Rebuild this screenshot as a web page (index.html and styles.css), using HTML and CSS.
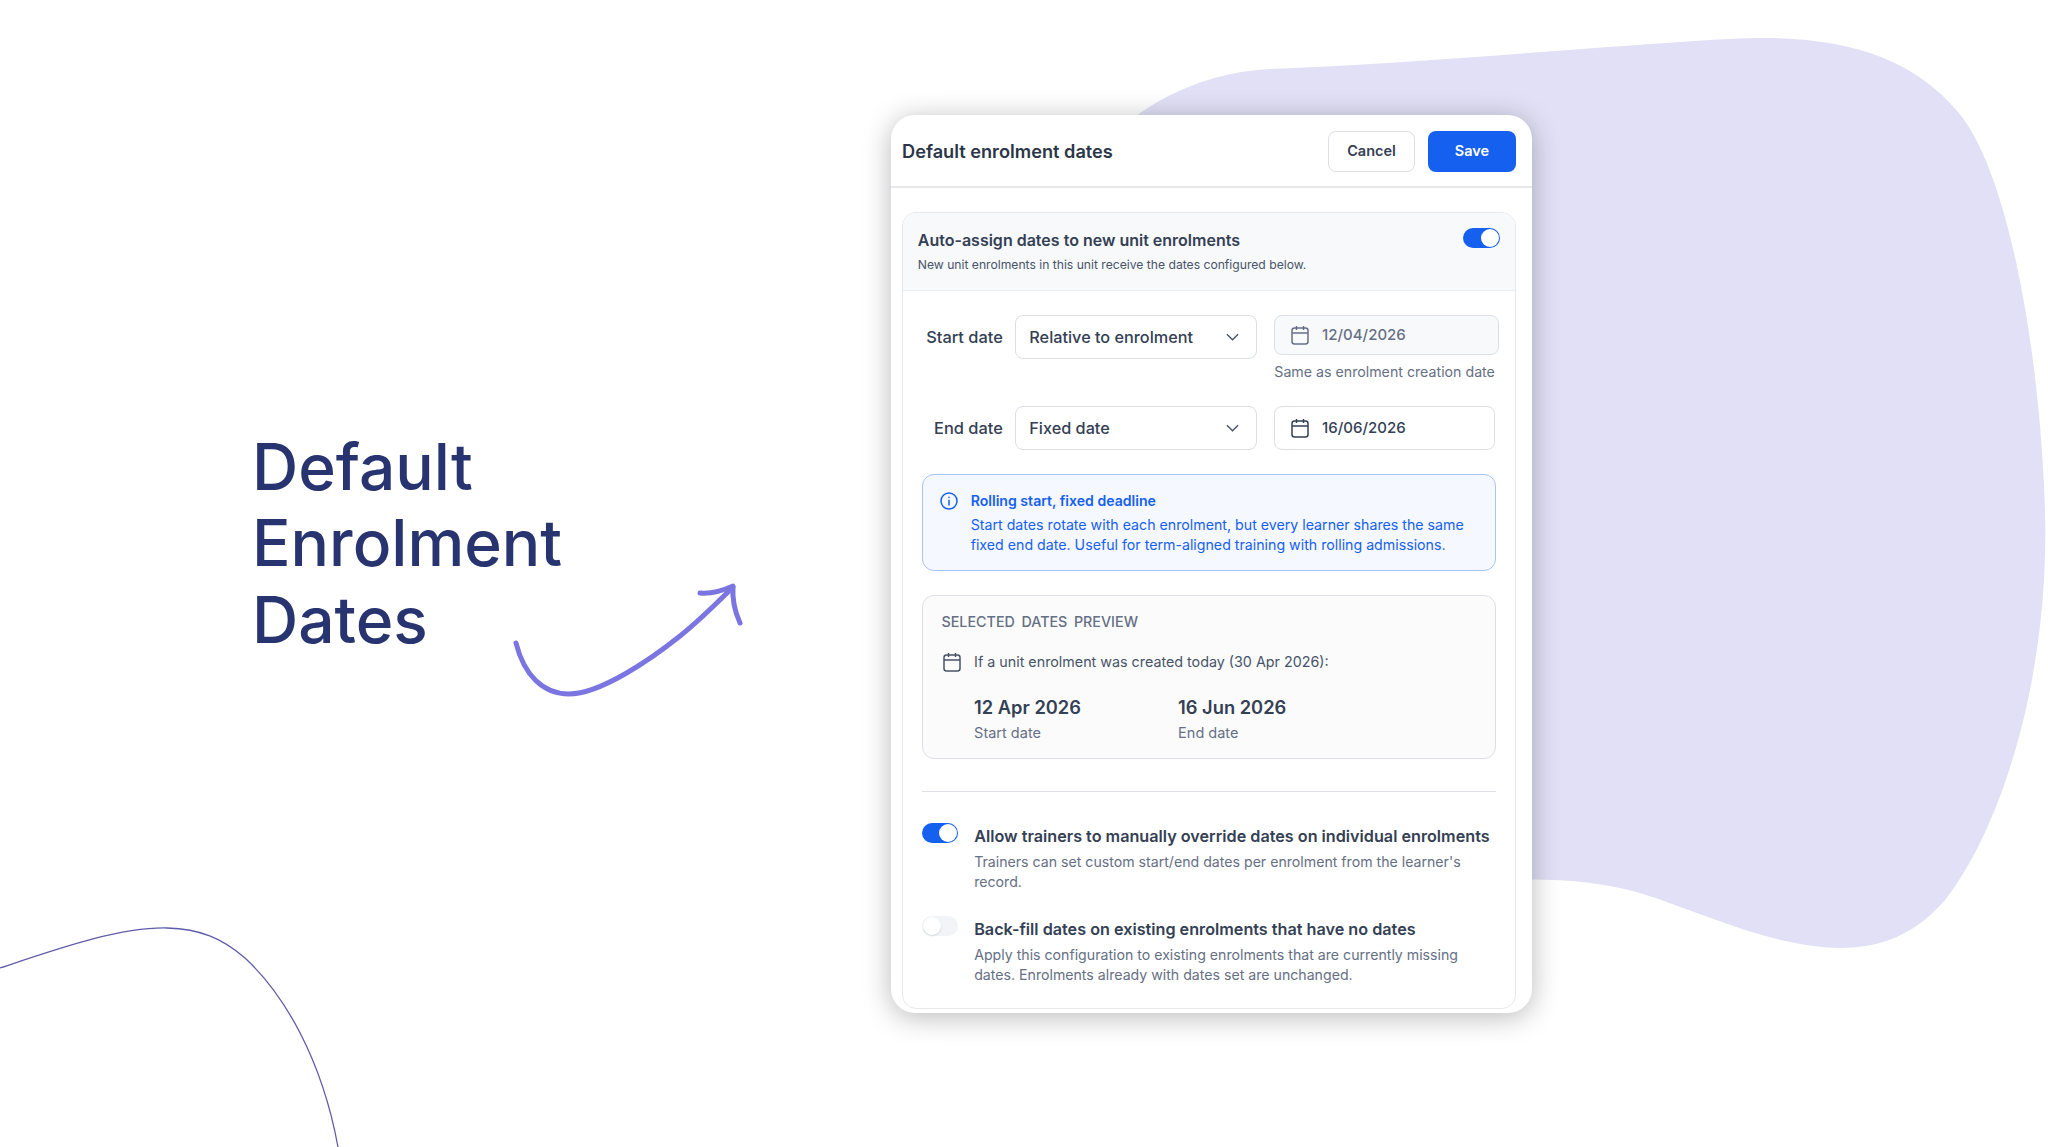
FILE: index.html
```html
<!DOCTYPE html>
<html lang="en">
<head>
<meta charset="utf-8">
<title>Default Enrolment Dates</title>
<link rel="stylesheet" href="styles.css">
</head>
<body>
<main class="page">
  <svg class="art" viewBox="0 0 2048 1147" aria-hidden="true">
    <path class="blob" d="M1100 146C1135 112 1190 73 1270 69C1400 64 1560 50 1680 42C1710 40 1740 38 1765 38C1850 38 1915 60 1958 112C2008 170 2040 350 2045 510C2050 680 2000 830 1945 900C1915 935 1880 948 1840 948C1775 948 1700 912 1640 893C1600 882 1560 878 1500 880Z"/>
    <path class="swoosh" d="M0 968C60 948 120 927 167 928C200 929 222 938 245 958C285 995 322 1060 338 1147"/>
    <path class="arrow" d="M516 643C524 675 543 694 569 694C600 694 650 660 680 636C700 620 716 604 733 587"/>
    <path class="arrow" d="M700 593C712 594 722 591 733 586C732 600 735 612 740 623"/>
  </svg>

  <h1 class="hero">Default<br>Enrolment<br>Dates</h1>

  <section class="card">
    <header class="card-head">
      <h2 class="card-title">Default enrolment dates</h2>
      <div class="actions">
        <button class="btn btn-ghost">Cancel</button>
        <button class="btn btn-primary">Save</button>
      </div>
    </header>

    <div class="card-body">
      <div class="panel">
        <div class="band">
          <div>
            <div class="band-title">Auto-assign dates to new unit enrolments</div>
            <div class="band-sub">New unit enrolments in this unit receive the dates configured below.</div>
          </div>
          <span class="toggle on"></span>
        </div>

        <div class="panel-body">
          <div class="row">
            <label class="row-label">Start date</label>
            <div class="select">Relative to enrolment
              <svg class="chev" viewBox="0 0 14 8"><path d="M1 1l6 6 6-6"/></svg>
            </div>
            <div class="field field-start">
              <div class="date date-off">
                <svg class="cal" viewBox="0 0 18 20"><rect x="1" y="3" width="16" height="16" rx="2.5"/><path d="M1 8h16M5.500 1v4M12.500 1v4"/></svg>
                12/04/2026
              </div>
              <div class="hint">Same as enrolment creation date</div>
            </div>
          </div>

          <div class="row row-end">
            <label class="row-label">End date</label>
            <div class="select">Fixed date
              <svg class="chev" viewBox="0 0 14 8"><path d="M1 1l6 6 6-6"/></svg>
            </div>
            <div class="field field-end">
              <div class="date">
                <svg class="cal cal-dark" viewBox="0 0 18 20"><rect x="1" y="3" width="16" height="16" rx="2.500"/><path d="M1 8h16M5.500 1v4M12.500 1v4"/></svg>
                16/06/2026
              </div>
            </div>
          </div>

          <div class="info">
            <svg class="info-icon" viewBox="0 0 18 18"><circle cx="9" cy="9" r="8"/><path d="M9 8.300v4.700M9 5.200v.3"/></svg>
            <div>
              <div class="info-title">Rolling start, fixed deadline</div>
              <p class="info-text">Start dates rotate with each enrolment, but every learner shares the same fixed end date. Useful for term-aligned training with rolling admissions.</p>
            </div>
          </div>

          <div class="preview">
            <div class="preview-label">SELECTED DATES PREVIEW</div>
            <div class="preview-line">
              <svg class="cal cal-slate" viewBox="0 0 18 20"><rect x="1" y="3" width="16" height="16" rx="2.500"/><path d="M1 8h16M5.500 1v4M12.500 1v4"/></svg>
              If a unit enrolment was created today (30 Apr 2026):
            </div>
            <div class="preview-dates">
              <div class="preview-col">
                <div class="preview-date">12 Apr 2026</div>
                <div class="preview-cap">Start date</div>
              </div>
              <div class="preview-col">
                <div class="preview-date">16 Jun 2026</div>
                <div class="preview-cap">End date</div>
              </div>
            </div>
          </div>

          <hr class="rule">

          <div class="option">
            <span class="toggle on"></span>
            <div class="option-text">
              <div class="option-title">Allow trainers to manually override dates on individual enrolments</div>
              <p class="option-desc">Trainers can set custom start/end dates per enrolment from the learner's record.</p>
            </div>
          </div>

          <div class="option option-next">
            <span class="toggle"></span>
            <div class="option-text">
              <div class="option-title">Back-fill dates on existing enrolments that have no dates</div>
              <p class="option-desc">Apply this configuration to existing enrolments that are currently missing dates. Enrolments already with dates set are unchanged.</p>
            </div>
          </div>
        </div>
      </div>
    </div>
  </section>
</main>
</body>
</html>
```

FILE: styles.css
```css
* { box-sizing: border-box; }
html, body { margin: 0; padding: 0; background: #fff; }
body { font-family: Inter, "Liberation Sans", sans-serif; }

.page {
  position: relative;
  width: 2048px;
  height: 1147px;
  overflow: hidden;
  display: flex;
  align-items: flex-start;
  padding: 114.700px 0 0 252px;
}

.art {
  position: absolute;
  inset: 0;
  width: 2048px;
  height: 1147px;
}
.blob { fill: #e2e0f6; }
.swoosh { fill: none; stroke: #5f5cab; stroke-width: 1.300; }
.arrow { fill: none; stroke: #7a75e0; stroke-width: 5; stroke-linecap: round; stroke-linejoin: round; }

.hero {
  position: relative;
  width: 638.500px;
  margin: 314px 0 0;
  font-size: 64px;
  line-height: 76.500px;
  font-weight: 500;
  color: #27346f;
}

.card {
  position: relative;
  width: 641.500px;
  height: 898.300px;
  background: #fff;
  border-radius: 24px;
  box-shadow: 0 4px 28px rgba(0, 0, 0, .28);
  overflow: hidden;
}

.card-head {
  height: 73.300px;
  padding: 16px 16px 0 11.500px;
  display: flex;
  justify-content: space-between;
  align-items: flex-start;
  border-bottom: 2px solid #e6e8ec;
}
.card-title {
  margin: 0;
  font-size: 18.200px;
  line-height: 41px;
  font-weight: 600;
  color: #2b3648;
}
.actions { display: flex; gap: 13px; }
.btn {
  height: 41px;
  border-radius: 8px;
  font: 600 14.500px/1 Inter, "Liberation Sans", sans-serif;
  padding: 0;
}
.btn-ghost { width: 87px; background: #fff; border: 1.500px solid #dcdfe5; color: #344054; }
.btn-primary { width: 88px; background: #1660f0; border: 0; color: #fff; }

.card-body { padding: 24px 16.500px 0 11.500px; }

.panel {
  border: 1.500px solid #e6e8ec;
  border-radius: 14px;
  overflow: hidden;
  background: #fff;
}
.band {
  height: 78px;
  padding: 15.300px 14.800px 0;
  display: flex;
  justify-content: space-between;
  align-items: flex-start;
  background: #f8f9fb;
  border-bottom: 1px solid #eceef2;
}
.band-title { font-size: 16px; line-height: 24px; font-weight: 600; color: #344054; }
.band-sub { margin-top: 4px; font-size: 12.150px; line-height: 18px; color: #475467; }

.toggle {
  position: relative;
  display: block;
  flex: none;
  width: 37px;
  height: 20px;
  border-radius: 10px;
  background: #f2f4f7;
}
.toggle::after {
  content: "";
  position: absolute;
  top: 1px;
  left: 1px;
  width: 18px;
  height: 18px;
  border-radius: 50%;
  background: #fff;
  box-shadow: 0 1px 2px rgba(16, 24, 40, .15);
}
.toggle.on { background: #1660f0; }
.toggle.on::after { left: 18px; box-shadow: none; }

.panel-body { padding: 24px 18.500px 23px 18.500px; }

.row { display: flex; align-items: flex-start; margin-left: 1.300px; }
.row-end { margin-top: 24px; }
.row-label {
  width: 80px;
  flex: none;
  text-align: right;
  font-size: 16.400px;
  line-height: 44px;
  font-weight: 500;
  color: #344054;
}
.select {
  flex: none;
  width: 241.700px;
  height: 44px;
  margin: 0 17.300px 0 12.500px;
  padding: 0 16.500px 0 13px;
  display: flex;
  align-items: center;
  justify-content: space-between;
  border: 1.500px solid #dcdfe5;
  border-radius: 8px;
  background: #fff;
  font-size: 16.250px;
  font-weight: 500;
  color: #344054;
}
.chev { width: 13px; height: 8px; fill: none; stroke: #475467; stroke-width: 1.500; }

.field { flex: none; }
.field-start { width: 225px; }
.field-end { width: 220.500px; }
.date {
  height: 44px;
  padding: 0 0 0 16px;
  display: flex;
  align-items: center;
  gap: 12.800px;
  border: 1.500px solid #dcdfe5;
  border-radius: 8px;
  background: #fff;
  font-size: 15px;
  font-weight: 500;
  color: #344054;
}
.date-off { height: 40px; background: #f8f9fb; color: #667085; }
.cal {
  width: 18px;
  height: 20px;
  flex: none;
  fill: none;
  stroke: #667085;
  stroke-width: 1.500;
}
.cal-dark { stroke: #344054; }
.cal-slate { stroke: #475467; margin-left: 1.300px; }
.hint { margin-top: 6.800px; font-size: 14.200px; line-height: 20px; color: #667085; }

.info {
  margin-top: 24.300px;
  height: 96.700px;
  padding: 15.900px 17px 0;
  display: flex;
  gap: 13.200px;
  border: 1px solid #a6c4fb;
  border-radius: 12px;
  background: #f5f8ff;
  color: #1660f0;
}
.info-icon {
  width: 18px;
  height: 18px;
  margin-top: 1px;
  flex: none;
  fill: none;
  stroke: #1660f0;
  stroke-width: 1.500;
  stroke-linecap: round;
}
.info-title { font-size: 14.100px; line-height: 20px; font-weight: 600; }
.info-text { margin: 3.800px 0 0; font-size: 14.200px; line-height: 20px; }

.preview {
  margin-top: 24.200px;
  height: 163.800px;
  padding: 15.700px 19px;
  border: 1.500px solid #dcdfe5;
  border-radius: 12px;
  background: #fbfbfc;
}
.preview-label {
  font-size: 14.300px;
  line-height: 20px;
  font-weight: 500;
  color: #667085;
  word-spacing: 2.800px;
}
.preview-line {
  margin-top: 20px;
  display: flex;
  align-items: center;
  gap: 13.300px;
  font-size: 14.300px;
  line-height: 20px;
  color: #475467;
}
.preview-dates { margin-top: 22.800px; padding-left: 32.600px; display: flex; }
.preview-col { width: 204px; }
.preview-date { font-size: 18.300px; line-height: 26px; font-weight: 600; color: #344054; }
.preview-cap { margin-top: 2.300px; font-size: 14.500px; line-height: 20px; color: #667085; }

.rule { margin: 32px 0 0; border: 0; border-top: 1.500px solid #dcdfe5; }

.option { margin-top: 31.500px; display: flex; gap: 16.700px; }
.option-next { margin-top: 24px; }
.option .toggle { width: 36px; }
.option .toggle.on::after { left: 17px; }
.option-title { margin-top: .700px; font-size: 16.200px; line-height: 24px; font-weight: 600; color: #344054; }
.option-desc { margin: 4.300px 0 0; font-size: 14.150px; line-height: 20px; color: #667085; }
```
